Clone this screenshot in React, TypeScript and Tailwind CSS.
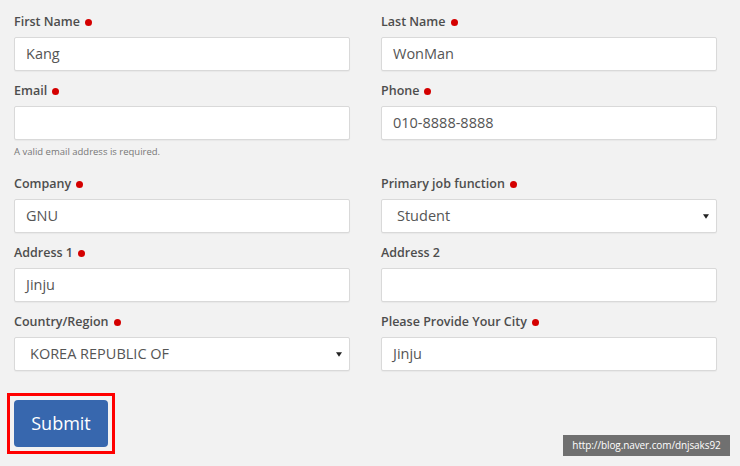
const font = { fontFamily: '"Open Sans", "Noto Sans", Arial, sans-serif' };

type Field = {
  label: string;
  required?: boolean;
  value?: string;
  select?: boolean;
  hint?: string;
};

const rows: [Field, Field][] = [
  [
    { label: "First Name", required: true, value: "Kang" },
    { label: "Last Name", required: true, value: "WonMan" },
  ],
  [
    { label: "Email", required: true, value: "", hint: "A valid email address is required." },
    { label: "Phone", required: true, value: "010-8888-8888" },
  ],
  [
    { label: "Company", required: true, value: "GNU" },
    { label: "Primary job function", required: true, value: "Student", select: true },
  ],
  [
    { label: "Address 1", required: true, value: "Jinju" },
    { label: "Address 2", value: "" },
  ],
  [
    { label: "Country/Region", required: true, value: "KOREA REPUBLIC OF", select: true },
    { label: "Please Provide Your City", required: true, value: "Jinju" },
  ],
];

function FormField({ field, hasHint }: { field: Field; hasHint: boolean }) {
  return (
    <div className="flex flex-col">
      <label className="flex h-[21px] items-center gap-[5px] pt-[2px] text-[12.5px] font-semibold text-[#4d4d4d]">
        {field.label}
        {field.required && <span className="inline-block h-[7px] w-[7px] rounded-full bg-[#d40000]" />}
      </label>
      <div className="relative mt-[5px] h-[34px] rounded-[2px] border border-[#d9d9d9] bg-white shadow-[0_1px_1px_rgba(0,0,0,0.04)]">
        <div className={`flex h-full items-center text-[14.5px] text-[#555] ${field.select ? "pl-[15px]" : "pl-[11px]"}`}>
          {field.value}
        </div>
        {field.select && (
          <svg viewBox="0 0 8 6" className="absolute top-[14px] right-[7px] h-[5px] w-[6px]" aria-hidden="true">
            <path d="M0 0h8L4 6z" fill="#222" />
          </svg>
        )}
      </div>
      {hasHint && (
        <div className="mt-[5px] mb-[5px] h-[14px] text-[9.5px] leading-[14px] text-[#777]">{field.hint ?? ""}</div>
      )}
    </div>
  );
}

export default function App() {
  return (
    <div className="relative h-[466px] w-[740px] overflow-hidden bg-[#f2f2f2]" style={font}>
      <div className="pt-[11px] pl-[14px]">
        <div className="grid w-[703px] grid-cols-[336px_336px] gap-x-[31px] gap-y-[9px]">
          {rows.map((row, i) => {
            const hasHint = row.some((f) => f.hint);
            return row.map((f) => <FormField key={i + f.label} field={f} hasHint={hasHint} />);
          })}
        </div>

        <div className="mt-[22px] ml-[-7px] inline-block border-[3px] border-[#ff0000] p-[4px]">
          <button className="h-[47px] w-[94px] rounded-[4px] bg-[#3767ae] text-[18px] text-white">Submit</button>
        </div>
      </div>

      <div className="absolute top-[435px] left-[563px] flex h-[21px] w-[167px] items-center justify-center bg-[#707070] text-[10px] tracking-[-0.1px] text-white">
        http://blog.naver.com/dnjsaks92
      </div>
    </div>
  );
}
